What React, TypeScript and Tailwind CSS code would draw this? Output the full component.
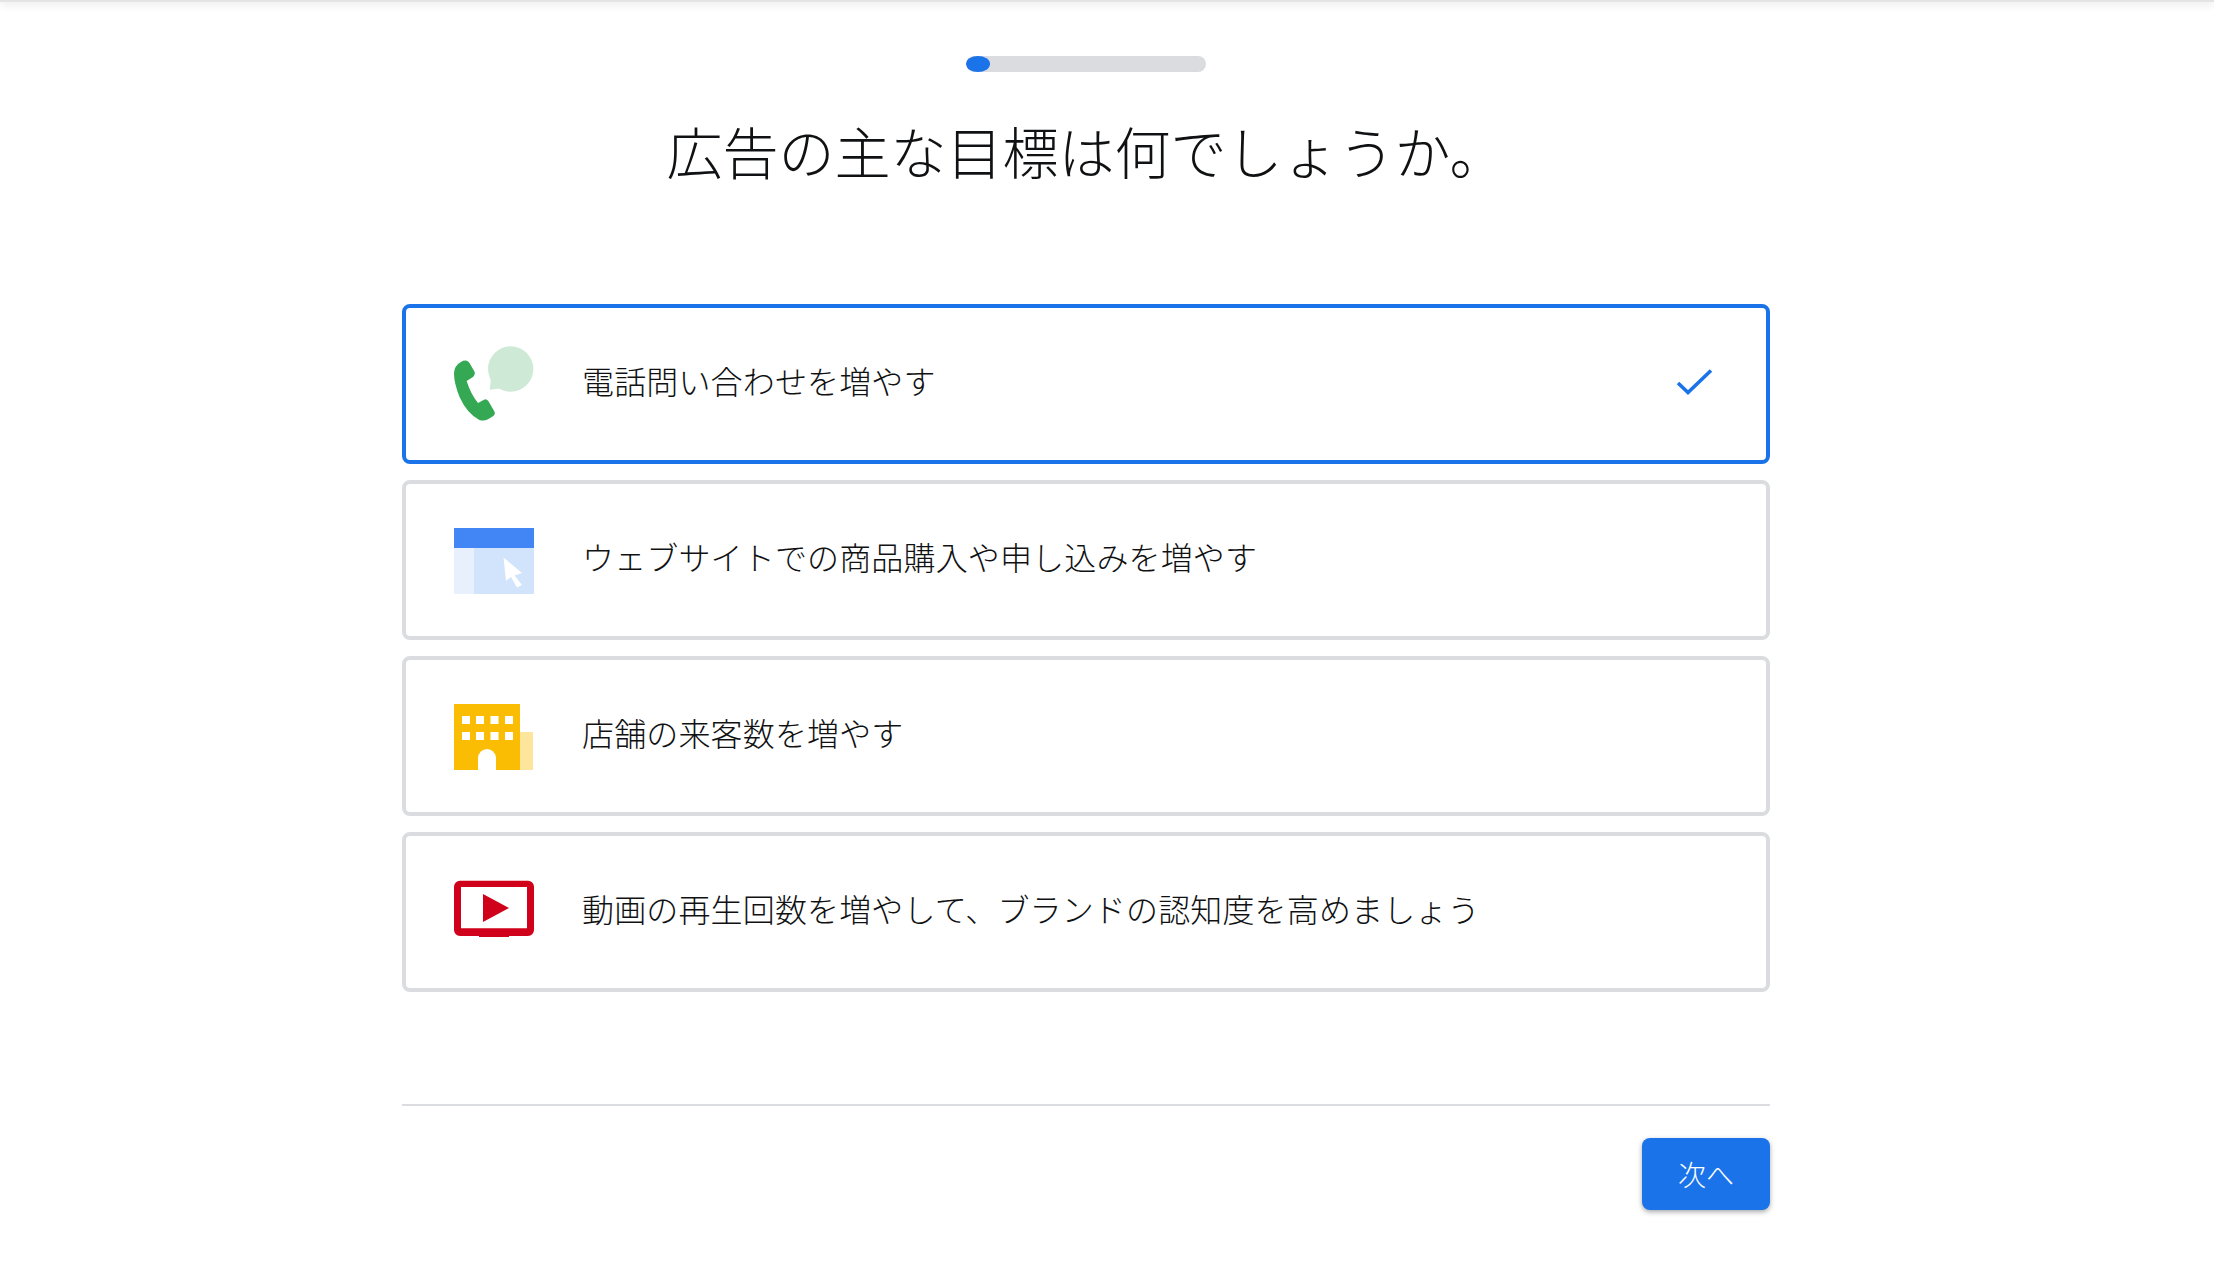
const PhoneIcon = () => (
  <svg width="80" height="80" viewBox="0 0 240 240" fill="none">
    <circle cx="170" cy="75" r="68" fill="#ceead6" />
    <path d="M112 95 L107 137 L145 133 Z" fill="#ceead6" />
    <path
      d="M22 53 Q28 49 38 50 Q44 52 47 58 L62 84 Q65 92 58 98 L38 111 Q50 150 72 177 L90 167 Q97 164 103 171 L122 204 Q125 211 118 216 L102 226 Q90 232 76 228 Q40 210 17 160 Q0 118 0 88 Q1 64 22 53 Z"
      fill="#34a853"
    />
  </svg>
);

const WebIcon = () => (
  <svg width="80" height="80" viewBox="0 0 80 80" fill="none">
    <rect x="0" y="8" width="80" height="20" fill="#4285f4" />
    <rect x="0" y="28" width="20" height="46" fill="#e8f0fe" />
    <rect x="20" y="28" width="60" height="46" fill="#d2e3fc" />
    <path d="M49.5 37.5 L68 53 L60.5 55.5 L68 65 L63 67.5 L57 57 L52 61 Z" fill="#ffffff" />
  </svg>
);

const StoreIcon = () => (
  <svg width="80" height="80" viewBox="0 0 80 80" fill="none">
    <rect x="66" y="36" width="13" height="38" fill="#fee59c" />
    <rect x="0" y="8" width="66" height="66" fill="#fbbc04" />
    <g fill="#ffffff">
      <rect x="8" y="20" width="8" height="8" />
      <rect x="22" y="20" width="8" height="8" />
      <rect x="36.5" y="20" width="8" height="8" />
      <rect x="51" y="20" width="8" height="8" />
      <rect x="8" y="36" width="8" height="8" />
      <rect x="22" y="36" width="8" height="8" />
      <rect x="36.5" y="36" width="8" height="8" />
      <rect x="51" y="36" width="8" height="8" />
      <path d="M24 74 V62 A9 9 0 0 1 42 62 V74 Z" />
    </g>
  </svg>
);

const VideoIcon = () => (
  <svg width="80" height="80" viewBox="0 0 80 80" fill="none">
    <path
      fillRule="evenodd"
      d="M6 8.7 H74 A6 6 0 0 1 80 14.7 V58 A6 6 0 0 1 74 64 H55 V65 H25 V64 H6 A6 6 0 0 1 0 58 V14.7 A6 6 0 0 1 6 8.7 Z M7 15 V56.3 H73 V15 Z"
      fill="#d0021b"
    />
    <path d="M29 22 L55 36 L29 50 Z" fill="#d0021b" />
  </svg>
);

const items = [
  { label: "電話問い合わせを増やす", icon: <PhoneIcon />, selected: true },
  { label: "ウェブサイトでの商品購入や申し込みを増やす", icon: <WebIcon />, selected: false },
  { label: "店舗の来客数を増やす", icon: <StoreIcon />, selected: false },
  { label: "動画の再生回数を増やして、ブランドの認知度を高めましょう", icon: <VideoIcon />, selected: false },
];

export default function App() {
  return (
    <div className="relative min-h-[1288px] bg-white pr-[42px] font-['Noto_Sans_CJK_JP','Noto_Sans',sans-serif] text-[#101113]">
      <div className="absolute inset-x-0 top-0 h-0.5 bg-[#e4e4e4] shadow-[0_1px_8px_rgba(0,0,0,0.25)]" />
      <div className="flex flex-col items-center pt-[56px]">
        <div className="h-4 w-[240px] overflow-hidden rounded-lg bg-[#dadce0]">
          <div className="h-4 w-6 rounded-[50%] bg-[#1a73e8]" />
        </div>
        <h1 className="mt-[42px] text-[56px] leading-[72px] font-light">広告の主な目標は何でしょうか。</h1>
        <div className="mt-[118px] flex w-[1368px] flex-col gap-4">
          {items.map((item) => (
            <div
              key={item.label}
              className={`flex h-[160px] items-center rounded-lg border-4 bg-white pl-[48px] ${
                item.selected ? "border-[#1a73e8]" : "border-[#dadce0]"
              }`}
            >
              <div className="h-20 w-20 shrink-0">{item.icon}</div>
              <span className="ml-[48px] -mt-[8px] text-[32px] leading-[48px] font-light tracking-[0.15px]">{item.label}</span>
              {item.selected && (
                <svg className="mr-[51px] ml-auto" width="40" height="40" viewBox="0 0 40 40" fill="none">
                  <path d="M3 19 L13 28.5 L36 6.5" stroke="#1a73e8" strokeWidth="3.6" />
                </svg>
              )}
            </div>
          ))}
        </div>
        <div className="mt-[112px] h-0.5 w-[1368px] bg-[#dadce0]" />
        <div className="mt-[32px] flex w-[1368px] justify-end">
          <button className="h-[72px] w-[128px] rounded-lg bg-[#1a73e8] text-[28px] font-light text-white shadow-[0_2px_5px_rgba(60,64,67,0.45)]">
            次へ
          </button>
        </div>
      </div>
    </div>
  );
}
